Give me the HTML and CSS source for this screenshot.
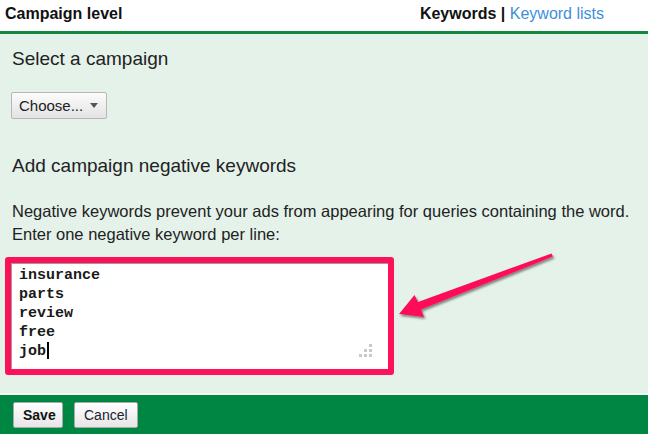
FILE: index.html
```html
<!DOCTYPE html>
<html lang="en">
  <head>
    <meta charset="UTF-8" />
    <meta name="viewport" content="width=device-width, initial-scale=1.0" />
    <title>Campaign negative keywords</title>
    <link rel="stylesheet" href="styles.css">
  </head>
  <body>
    <div class="topbar">
      <div class="level">Campaign level</div>
      <div class="tabs"><b>Keywords</b> <b class="sep">|</b> <a href="#">Keyword lists</a></div>
    </div>

    <div class="main">
      <h2 class="title">Select a campaign</h2>
      <button class="choose">Choose... <span class="caret-down"></span></button>

      <h2 class="title second">Add campaign negative keywords</h2>
      <p class="help">
        Negative keywords prevent your ads from appearing for queries containing the word.<br />
        Enter one negative keyword per line:
      </p>

      <div class="highlight">
        <div class="keywords">
          <div>insurance</div>
          <div>parts</div>
          <div>review</div>
          <div>free</div>
          <div>job<span class="cursor"></span></div>
          <svg class="grip" width="14" height="14" viewBox="0 0 14 14">
            <rect x="10" y="0" width="3" height="3" fill="#c9c9c9" />
            <rect x="5" y="5" width="3" height="3" fill="#c9c9c9" />
            <rect x="10" y="5" width="3" height="3" fill="#c9c9c9" />
            <rect x="0" y="10" width="3" height="3" fill="#c9c9c9" />
            <rect x="5" y="10" width="3" height="3" fill="#c9c9c9" />
            <rect x="10" y="10" width="3" height="3" fill="#c9c9c9" />
          </svg>
        </div>
      </div>
    </div>

    <div class="footer">
      <button class="btn save">Save</button>
      <button class="btn">Cancel</button>
    </div>

    <!-- arrow pointing at the keyword box -->
    <svg class="arrow" width="648" height="434" viewBox="0 0 648 434">
      <defs>
        <filter id="shadow" x="-10%" y="-10%" width="130%" height="140%">
          <feDropShadow dx="1.5" dy="2" stdDeviation="1.2" flood-color="#000" flood-opacity="0.45" />
        </filter>
      </defs>
      <polygon filter="url(#shadow)" fill="#fd1158"
        points="399,314 424,317 421,309.5 553,256.5 551.5,253.5 418,302 414.5,295" />
    </svg>
  </body>
</html>
```

FILE: styles.css
```css
* {
  box-sizing: border-box;
}
html,
body {
  margin: 0;
  padding: 0;
}

body {
  position: relative;
  width: 648px;
  height: 434px;
  display: flex;
  flex-direction: column;
  font-family: "Liberation Sans", Arial, sans-serif;
  color: #222;
  overflow: hidden;
}

.topbar {
  height: 34px;
  flex: none;
  display: flex;
  justify-content: space-between;
  align-items: center;
  padding: 0 44px 3px 5px;
  background: #fff;
  border-bottom: 3px solid #12893f;
  font-size: 16px;
  color: #111;
}
.topbar .level {
  font-weight: bold;
}
.tabs a {
  color: #3d8fdb;
  text-decoration: none;
}

.main {
  flex: 1;
  background: #e4f2ea;
  padding: 14px 12px 0 12px;
  border-bottom: 2px solid #f1f9f4;
}

.title {
  margin: 0;
  font-size: 19px;
  line-height: 22px;
  font-weight: normal;
  color: #222;
}
.title.second {
  margin-top: 36px;
}

.choose {
  margin: 22px 0 0 -1px;
  height: 27px;
  width: 96px;
  display: flex;
  align-items: center;
  gap: 7px;
  padding: 0 0 0 7px;
  font-family: "Liberation Sans", Arial, sans-serif;
  font-size: 15px;
  color: #222;
  border: 1px solid #b7b7b7;
  border-radius: 2px;
  background: linear-gradient(#fcfcfc, #e3e3e3);
}
.caret-down {
  width: 0;
  height: 0;
  border-left: 4px solid transparent;
  border-right: 4px solid transparent;
  border-top: 5px solid #555;
}

.help {
  margin: 23px 0 0 0;
  font-size: 16.5px;
  line-height: 23px;
}

.highlight {
  margin: 11px 0 0 -7px;
  width: 389px;
  height: 118px;
  border: 6px solid #fd1158;
  border-radius: 3px;
}

.keywords {
  position: relative;
  height: 100%;
  background: #fff;
  border-top: 1px solid #9c9c9c;
  border-left: 1px solid #9c9c9c;
  padding: 2px 0 0 7px;
  font-family: "Liberation Mono", "Courier New", monospace;
  font-weight: bold;
  font-size: 15px;
  line-height: 19px;
  color: #1a1a1a;
}
.cursor {
  display: inline-block;
  width: 1.5px;
  height: 17px;
  margin-left: 1px;
  background: #000;
  vertical-align: -4px;
}
.grip {
  position: absolute;
  right: 15px;
  bottom: 11px;
}

.footer {
  height: 39px;
  flex: none;
  background: #008643;
  display: flex;
  align-items: flex-start;
  gap: 11px;
  padding: 7px 0 0 13px;
}
.btn {
  height: 26px;
  padding: 0 9px;
  font-family: "Liberation Sans", Arial, sans-serif;
  font-size: 14px;
  color: #223;
  border: 1px solid #a9a9a9;
  border-radius: 2px;
  background: linear-gradient(#ffffff, #e6e6e6);
}
.btn.save {
  width: 50px;
  font-weight: bold;
  color: #111;
}

.arrow {
  position: absolute;
  left: 0;
  top: 0;
  pointer-events: none;
}
```
